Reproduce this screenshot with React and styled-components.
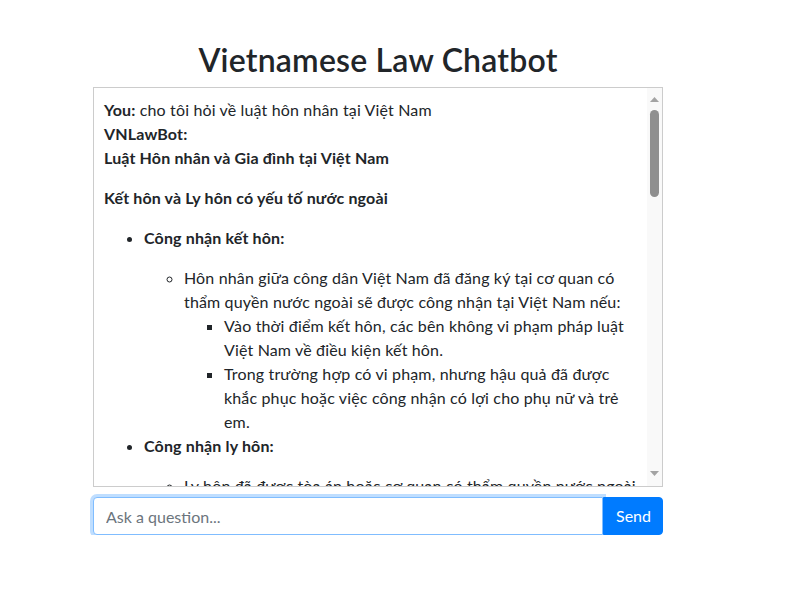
import React from "react";
import styled, { createGlobalStyle } from "styled-components";

const GlobalStyle = createGlobalStyle`
  * { box-sizing: border-box; }
  body {
    margin: 0;
    font-family: Lato, "Noto Sans", sans-serif;
    font-size: 16px;
    line-height: 1.5;
    letter-spacing: 0.15px;
    color: #212529;
    background: #fff;
  }
`;

const Page = styled.div`
  width: 570px;
  margin-left: 93px;
  padding-top: 41px;
`;

const Title = styled.h2`
  margin: 0 0 8px;
  text-align: center;
  font-size: 32px;
  font-weight: 600;
  line-height: 1.2;
  letter-spacing: 0.2px;
`;

const ChatBox = styled.div`
  display: flex;
  height: 400px;
  border: 1px solid #ccc;
`;

const ScrollArea = styled.div`
  flex: 1;
  min-width: 0;
  padding: 10px;
  overflow-y: auto;
  scrollbar-width: none;
`;

const ScrollBar = styled.div`
  display: flex;
  flex-direction: column;
  width: 15px;
  background: #f9f9f9;
`;

const ArrowButton = styled.div`
  display: flex;
  justify-content: center;
  align-items: ${(p) => (p.$down ? "flex-start" : "flex-end")};
  height: 18px;
  padding: ${(p) => (p.$down ? "3px 0 0" : "0 0 4px")};
`;

const Track = styled.div`
  flex: 1;
  padding: 4px 3px;
`;

const Thumb = styled.div`
  height: 87px;
  border-radius: 5px;
  background: #8f8f8f;
`;

const Message = styled.div``;

const Markdown = styled.div`
  p {
    margin: 0 0 16px;
  }
  ul {
    margin: 0 0 16px;
    padding-left: 40px;
  }
  ul ul {
    margin-bottom: 0;
    list-style-type: circle;
  }
  ul ul ul {
    list-style-type: square;
  }
`;

const InputGroup = styled.form`
  display: flex;
  margin-top: 10px;
`;

const Input = styled.input`
  flex: 1;
  height: 38px;
  padding: 6px 12px;
  font: inherit;
  color: #495057;
  border: 1px solid #80bdff;
  border-radius: 4px 0 0 4px;
  outline: none;
  box-shadow: 0 0 0 3px rgba(0, 123, 255, 0.25);
  &::placeholder {
    color: #6c757d;
  }
`;

const SendButton = styled.button`
  width: 60px;
  height: 38px;
  padding: 6px 12px;
  font: inherit;
  color: #fff;
  background: #007bff;
  border: 1px solid #007bff;
  border-radius: 0 4px 4px 0;
`;

const Arrow = ({ down }) => (
  <svg width="9" height="5" viewBox="0 0 9 5">
    <polygon points={down ? "0,0 9,0 4.5,5" : "0,5 9,5 4.5,0"} fill="#a3a3a3" />
  </svg>
);

export default function App() {
  return (
    <>
      <GlobalStyle />
      <Page>
        <Title>Vietnamese Law Chatbot</Title>
        <ChatBox>
          <ScrollArea>
            <Message>
              <strong>You:</strong> cho tôi hỏi về luật hôn nhân tại Việt Nam
            </Message>
            <Message>
              <strong>VNLawBot:</strong>
              <Markdown>
                <p><strong>Luật Hôn nhân và Gia đình tại Việt Nam</strong></p>
                <p><strong>Kết hôn và Ly hôn có yếu tố nước ngoài</strong></p>
                <ul>
                  <li>
                    <p><strong>Công nhận kết hôn:</strong></p>
                    <ul>
                      <li>
                        Hôn nhân giữa công dân Việt Nam đã đăng ký tại cơ quan có thẩm quyền nước ngoài sẽ được công nhận tại Việt Nam nếu:
                        <ul>
                          <li>Vào thời điểm kết hôn, các bên không vi phạm pháp luật Việt Nam về điều kiện kết hôn.</li>
                          <li>Trong trường hợp có vi phạm, nhưng hậu quả đã được khắc phục hoặc việc công nhận có lợi cho phụ nữ và trẻ em.</li>
                        </ul>
                      </li>
                    </ul>
                  </li>
                  <li>
                    <p><strong>Công nhận ly hôn:</strong></p>
                    <ul>
                      <li>
                        Ly hôn đã được tòa án hoặc cơ quan có thẩm quyền nước ngoài giải quyết sẽ được công nhận tại Việt Nam.
                      </li>
                    </ul>
                  </li>
                </ul>
              </Markdown>
            </Message>
          </ScrollArea>
          <ScrollBar>
            <ArrowButton>
              <Arrow />
            </ArrowButton>
            <Track>
              <Thumb />
            </Track>
            <ArrowButton $down>
              <Arrow down />
            </ArrowButton>
          </ScrollBar>
        </ChatBox>
        <InputGroup onSubmit={(e) => e.preventDefault()}>
          <Input placeholder="Ask a question..." autoFocus />
          <SendButton type="submit">Send</SendButton>
        </InputGroup>
      </Page>
    </>
  );
}
